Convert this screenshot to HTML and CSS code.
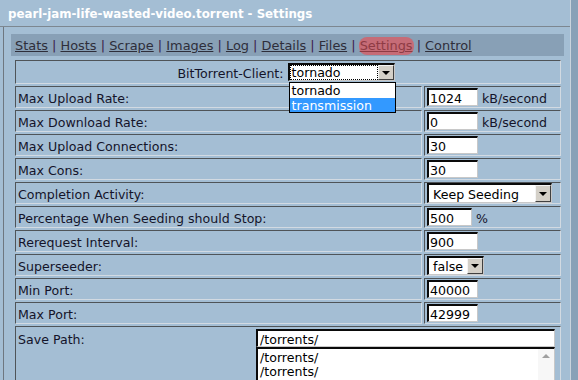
FILE: index.html
```html
<!DOCTYPE html>
<html>
<head>
<meta charset="utf-8">
<link rel="stylesheet" href="styles.css">
</head>
<body>
<div class="window">
  <div class="title">pearl-jam-life-wasted-video.torrent - Settings</div>
  <div class="panel">
    <nav class="tabs">
      <a>Stats</a> <span class="sep">|</span> <a>Hosts</a> <span class="sep">|</span> <a>Scrape</a> <span class="sep">|</span> <a>Images</a> <span class="sep">|</span> <a>Log</a> <span class="sep">|</span> <a>Details</a> <span class="sep">|</span> <a>Files</a> <span class="sep">|</span> <a class="active">Settings</a> <span class="sep">|</span> <a>Control</a>
    </nav>
    <div class="settings">
      <div class="cell full center first">
        <span class="client-label">BitTorrent-Client:</span>
        <span class="select client open">
          <span class="sel-text"><span class="focus">tornado</span></span><span class="sel-btn"><span class="arrow"></span></span>
          <span class="options">
            <span class="opt">tornado</span>
            <span class="opt hl">transmission</span>
          </span>
        </span>
      </div>

      <div class="cell">Max Upload Rate:</div>
      <div class="cell val"><span class="input">1024</span><span class="unit">kB/second</span></div>

      <div class="cell">Max Download Rate:</div>
      <div class="cell val"><span class="input">0</span><span class="unit">kB/second</span></div>

      <div class="cell">Max Upload Connections:</div>
      <div class="cell val"><span class="input">30</span></div>

      <div class="cell">Max Cons:</div>
      <div class="cell val"><span class="input">30</span></div>

      <div class="cell">Completion Activity:</div>
      <div class="cell val"><span class="select seeding"><span class="sel-text">Keep Seeding</span><span class="sel-btn"><span class="arrow"></span></span></span></div>

      <div class="cell">Percentage When Seeding should Stop:</div>
      <div class="cell val"><span class="input pct">500</span><span class="unit">%</span></div>

      <div class="cell">Rerequest Interval:</div>
      <div class="cell val"><span class="input">900</span></div>

      <div class="cell">Superseeder:</div>
      <div class="cell val"><span class="select bool"><span class="sel-text">false</span><span class="sel-btn"><span class="arrow"></span></span></span></div>

      <div class="cell">Min Port:</div>
      <div class="cell val"><span class="input">40000</span></div>

      <div class="cell">Max Port:</div>
      <div class="cell val"><span class="input">42999</span></div>

      <div class="cell full path-row">
        <span class="path-label">Save Path:</span>
        <div class="path-fields">
          <span class="input path">/torrents/</span>
          <div class="listbox">
            <div class="list-items">
              <span>/torrents/</span>
              <span>/torrents/</span>
            </div>
            <div class="scroll"><span class="up"></span></div>
          </div>
        </div>
      </div>
    </div>
  </div>
</div>
</body>
</html>
```

FILE: styles.css
```css
* { box-sizing: border-box; }
html, body {
  margin: 0;
  padding: 0;
  height: 100%;
  overflow: hidden;
}
body {
  background: #88a1b7;
  font-family: "DejaVu Sans", Verdana, sans-serif;
  font-size: 12.6px;
  color: #14142a;
}
.window {
  width: 571px;
  height: 100%;
  background: #a4bed4;
  border-right: 1px solid #c9d3dc;
  display: flex;
  flex-direction: column;
  overflow: hidden;
}
.title {
  flex: none;
  height: 27px;
  padding: 7px 0 0 8px;
  font-weight: bold;
  font-size: 11.8px;
  color: #ffffff;
  border-bottom: 1px solid #7d8790;
}
.panel {
  flex: 1;
  margin-left: 3px;
  border-left: 1px solid #6e7780;
  padding: 7px 6px 0 7px;
  overflow: hidden;
}
.tabs {
  height: 22px;
  background: #88a0b6;
  padding: 4px 0 0 4px;
  color: #3a1c4a;
  white-space: nowrap;
  font-size: 12.9px;
  line-height: 15px;
}
.tabs a {
  color: #2e2e3a;
  text-decoration: underline;
}
.tabs a.active {
  background: #c66c77;
  color: #8e3b44;
  border-radius: 8px;
  padding: 1px 1px 2px;
  margin: 0 -1px;
}
.settings {
  margin: 4px 4px 0 4px;
  display: grid;
  grid-template-columns: 407px 137px;
  gap: 2px;
}
.cell {
  height: 22px;
  border: 1px solid;
  border-color: #4f5458 #d2dae2 #d2dae2 #4f5458;
  padding: 3px 2px 0;
  display: flex;
  align-items: center;
  white-space: nowrap;
}
.cell.val { padding-top: 0; }
.cell.full { grid-column: 1 / 3; }
.cell.center { justify-content: center; }
.cell.first { height: 24px; gap: 4px; padding: 0 4px 0 0; }
.client-label { padding-top: 2px; }
.input {
  display: inline-block;
  width: 51px;
  height: 18px;
  background: #fff;
  border-style: solid;
  border-width: 2px 1px 1px 2px;
  border-color: #0a0a0a #c8c8c8 #c8c8c8 #0a0a0a;
  padding: 1px 1px 0;
  line-height: 15px;
  color: #000;
}
.input.pct { width: 45px; }
.unit { margin-left: 4px; padding-top: 3px; }
.select {
  position: relative;
  display: inline-flex;
  background: #fff;
  border-style: solid;
  border-width: 2px 1px 1px 2px;
  border-color: #0a0a0a #c8c8c8 #c8c8c8 #0a0a0a;
  color: #000;
}
.sel-text {
  flex: 1;
  display: flex;
  align-items: center;
  padding-left: 1px;
  padding-top: 1px;
}
.sel-btn {
  width: 16px;
  background: #d4d0c8;
  border: 1px solid;
  border-color: #f4f4f4 #404040 #404040 #f4f4f4;
  display: flex;
  align-items: center;
  justify-content: center;
}
.arrow {
  width: 0;
  height: 0;
  border-left: 4px solid transparent;
  border-right: 4px solid transparent;
  border-top: 4px solid #000;
}
.select.client { width: 107px; height: 18px; }
.select.client .sel-text { padding: 0; }
.focus {
  flex: 1;
  height: 100%;
  border: 1px dotted #000;
  padding-left: 1px;
  line-height: 14px;
}
.select.seeding { width: 125px; height: 20px; }
.select.seeding .sel-text { padding-left: 4px; }
.select.bool { width: 57px; height: 19px; }
.select.bool .sel-text { padding-left: 4px; }
.options {
  position: absolute;
  left: -1px;
  top: 17px;
  width: 107px;
  background: #fff;
  border: 1px solid #000;
  display: flex;
  flex-direction: column;
  z-index: 2;
}
.opt {
  height: 14.5px;
  line-height: 15px;
  padding-left: 2px;
}
.opt.hl { background: #3399ff; color: #fff; }
.path-row {
  height: 60px;
  align-items: flex-start;
  padding-top: 2px;
}
.path-label {
  width: 238px;
  line-height: 19px;
  padding-top: 1px;
}
.path-fields {
  display: flex;
  flex-direction: column;
}
.input.path { width: 299px; padding-left: 2px; }
.listbox {
  width: 299px;
  height: 40px;
  background: #fff;
  border-style: solid;
  border-width: 2px 1px 1px 2px;
  border-color: #0a0a0a #c8c8c8 #c8c8c8 #0a0a0a;
  display: flex;
  color: #000;
}
.list-items {
  flex: 1;
  display: flex;
  flex-direction: column;
  padding: 2px 0 0 2px;
  line-height: 14px;
}
.scroll {
  width: 16px;
  background: #f7f7f7;
  display: flex;
  justify-content: center;
  padding-top: 5px;
}
.up {
  width: 0;
  height: 0;
  border-left: 4px solid transparent;
  border-right: 4px solid transparent;
  border-bottom: 4px solid #a0a0a0;
}
```
